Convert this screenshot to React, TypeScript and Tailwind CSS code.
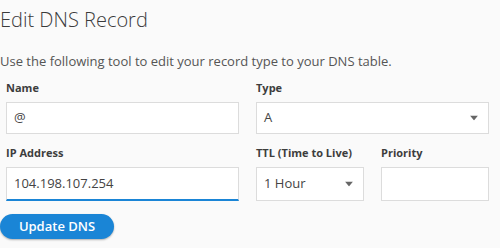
import React from 'react';

const font = { fontFamily: '"Open Sans", sans-serif' };

const Caret = () => (
    <svg width="8" height="5" viewBox="0 0 8 5" className="absolute top-1/2 -translate-y-1/2">
        <path d="M0 0 H8 L4 5 Z" fill="#666" />
    </svg>
);

const Field: React.FC<{ label: string; children: React.ReactNode }> = ({ label, children }) => (
    <div className="px-[6px]">
        <label className="block text-[11px] font-bold text-[#3d3d3d] leading-[14px] mb-[7px] whitespace-nowrap">{label}</label>
        {children}
    </div>
);

const App: React.FC = () => {
    return (
        <div className="w-[500px] h-[248px] bg-[#fafafa] overflow-hidden text-[#444]" style={font}>
            <h1 className="pt-[7px] text-[20px] font-light leading-[26px] text-[#3a3a3a]">Edit DNS Record</h1>
            <p className="mt-[20px] text-[13px] leading-[16px] text-[#555]">
                Use the following tool to edit your record type to your DNS table.
            </p>

            <div className="w-[495px] grid grid-cols-2 gap-x-[5px] mt-[12px]">
                <Field label="Name">
                    <div className="h-[32px] bg-white border border-[#dcdcdc] flex items-center px-[7px] text-[13px] text-[#444]">@</div>
                </Field>
                <Field label="Type">
                    <div className="relative h-[32px] bg-white border border-[#dcdcdc] flex items-center px-[7px] text-[13px] text-[#444]">
                        A
                        <span className="absolute right-[18px] top-0 h-full"><Caret /></span>
                    </div>
                </Field>
            </div>

            <div className="w-[495px] grid grid-cols-2 gap-x-[5px] mt-[12px]">
                <Field label="IP Address">
                    <div className="h-[34px] bg-white border border-[#dcdcdc] border-b-2 border-b-[#1a85d6] flex items-center px-[7px] text-[13px] text-[#444]">104.198.107.254</div>
                </Field>
                <div className="grid grid-cols-2 gap-x-[5px]">
                    <Field label="TTL (Time to Live)">
                        <div className="relative h-[34px] bg-white border border-[#dcdcdc] flex items-center px-[7px] text-[13px] text-[#444]">
                            1 Hour
                            <span className="absolute right-[18px] top-0 h-full"><Caret /></span>
                        </div>
                    </Field>
                    <Field label="Priority">
                        <div className="h-[34px] bg-white border border-[#dcdcdc]"></div>
                    </Field>
                </div>
            </div>

            <button className="block mt-[13px] w-[114px] h-[25px] rounded-full bg-[#1a85d6] text-white text-[13px] font-semibold shadow-[0_1px_2px_rgba(0,0,0,0.3)]">
                Update DNS
            </button>
        </div>
    );
};

export default App;
